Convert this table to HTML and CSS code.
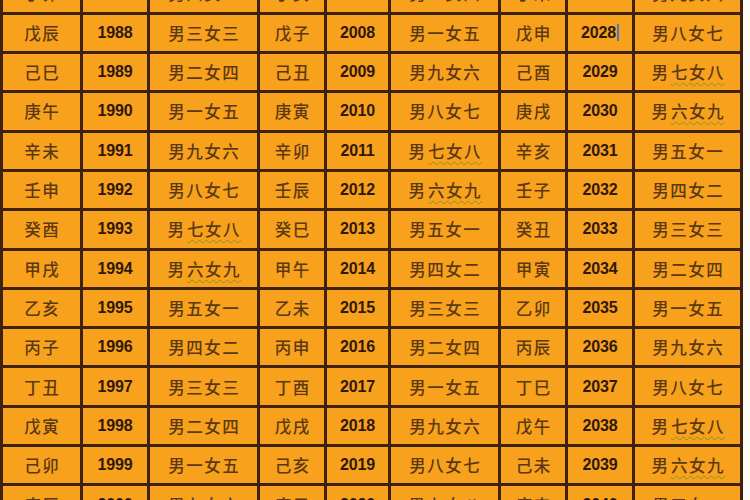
FILE: index.html
```html
<!DOCTYPE html>
<html lang="zh">
<head>
<meta charset="utf-8">
<title>生肖年份表</title>
<link rel="stylesheet" href="styles.css">
</head>
<body>
<div class="sheet">
  <div class="grid">
    <div class="c gz">丁卯</div><div class="c yr">1987</div><div class="c rs">男四女二</div><div class="c gz">丁亥</div><div class="c yr">2007</div><div class="c rs">男二女四</div><div class="c gz">丁未</div><div class="c yr">2027</div><div class="c rs">男九女六</div>
    <div class="c gz">戊辰</div><div class="c yr">1988</div><div class="c rs">男三女三</div><div class="c gz">戊子</div><div class="c yr">2008</div><div class="c rs">男一女五</div><div class="c gz">戊申</div><div class="c yr">2028<span class="caret"></span></div><div class="c rs">男八女七</div>
    <div class="c gz">己巳</div><div class="c yr">1989</div><div class="c rs">男二女四</div><div class="c gz">己丑</div><div class="c yr">2009</div><div class="c rs">男九女六</div><div class="c gz">己酉</div><div class="c yr">2029</div><div class="c rs">男<span class="sq">七女八</span></div>
    <div class="c gz">庚午</div><div class="c yr">1990</div><div class="c rs">男一女五</div><div class="c gz">庚寅</div><div class="c yr">2010</div><div class="c rs">男八女七</div><div class="c gz">庚戌</div><div class="c yr">2030</div><div class="c rs">男<span class="sq">六女九</span></div>
    <div class="c gz">辛未</div><div class="c yr">1991</div><div class="c rs">男九女六</div><div class="c gz">辛卯</div><div class="c yr">2011</div><div class="c rs">男<span class="sq">七女八</span></div><div class="c gz">辛亥</div><div class="c yr">2031</div><div class="c rs">男五女一</div>
    <div class="c gz">壬申</div><div class="c yr">1992</div><div class="c rs">男八女七</div><div class="c gz">壬辰</div><div class="c yr">2012</div><div class="c rs">男<span class="sq">六女九</span></div><div class="c gz">壬子</div><div class="c yr">2032</div><div class="c rs">男四女二</div>
    <div class="c gz">癸酉</div><div class="c yr">1993</div><div class="c rs">男<span class="sq">七女八</span></div><div class="c gz">癸巳</div><div class="c yr">2013</div><div class="c rs">男五女一</div><div class="c gz">癸丑</div><div class="c yr">2033</div><div class="c rs">男三女三</div>
    <div class="c gz">甲戌</div><div class="c yr">1994</div><div class="c rs">男<span class="sq">六女九</span></div><div class="c gz">甲午</div><div class="c yr">2014</div><div class="c rs">男四女二</div><div class="c gz">甲寅</div><div class="c yr">2034</div><div class="c rs">男二女四</div>
    <div class="c gz">乙亥</div><div class="c yr">1995</div><div class="c rs">男五女一</div><div class="c gz">乙未</div><div class="c yr">2015</div><div class="c rs">男三女三</div><div class="c gz">乙卯</div><div class="c yr">2035</div><div class="c rs">男一女五</div>
    <div class="c gz">丙子</div><div class="c yr">1996</div><div class="c rs">男四女二</div><div class="c gz">丙申</div><div class="c yr">2016</div><div class="c rs">男二女四</div><div class="c gz">丙辰</div><div class="c yr">2036</div><div class="c rs">男九女六</div>
    <div class="c gz">丁丑</div><div class="c yr">1997</div><div class="c rs">男三女三</div><div class="c gz">丁酉</div><div class="c yr">2017</div><div class="c rs">男一女五</div><div class="c gz">丁巳</div><div class="c yr">2037</div><div class="c rs">男八女七</div>
    <div class="c gz">戊寅</div><div class="c yr">1998</div><div class="c rs">男二女四</div><div class="c gz">戊戌</div><div class="c yr">2018</div><div class="c rs">男九女六</div><div class="c gz">戊午</div><div class="c yr">2038</div><div class="c rs">男<span class="sq">七女八</span></div>
    <div class="c gz">己卯</div><div class="c yr">1999</div><div class="c rs">男一女五</div><div class="c gz">己亥</div><div class="c yr">2019</div><div class="c rs">男八女七</div><div class="c gz">己未</div><div class="c yr">2039</div><div class="c rs">男<span class="sq">六女九</span></div>
    <div class="c gz">庚辰</div><div class="c yr">2000</div><div class="c rs">男九女六</div><div class="c gz">庚子</div><div class="c yr">2020</div><div class="c rs">男<span class="sq">七女八</span></div><div class="c gz">庚申</div><div class="c yr">2040</div><div class="c rs">男五女一</div>
  </div>
</div>
</body>
</html>
```
FILE: styles.css
```css
html, body {
  margin: 0;
  padding: 0;
  background: #fbfaf6;
  overflow: hidden;
  height: 500px;
}

.sheet {
  width: 750px;
  height: 500px;
  overflow: hidden;
}

.grid {
  display: grid;
  grid-template-columns: 77px 64px 107px 64px 61px 107px 64px 64px 105px;
  grid-auto-rows: 36.33px;
  gap: 3px;
  padding: 3px;
  width: max-content;
  margin-top: -27.8px;
  background: #3e220c;
}

.c {
  background: #f8a11d;
  display: flex;
  align-items: center;
  justify-content: center;
  white-space: nowrap;
}

.gz, .rs {
  font-family: "Noto Sans CJK SC", "Noto Sans", sans-serif;
  font-size: 16.5px;
  font-weight: 500;
  letter-spacing: 1.5px;
  color: #5c3912;
  text-indent: 1.5px;
}

.yr {
  font-family: "Liberation Sans", Arial, sans-serif;
  font-size: 16px;
  font-weight: 700;
  color: #2f1808;
  letter-spacing: -0.2px;
}

.sq {
  text-decoration: underline wavy #86961c;
  text-decoration-thickness: 1px;
  text-underline-offset: 3px;
}

.caret {
  display: inline-block;
  width: 2px;
  height: 17px;
  margin-left: 1px;
  background: #4a78c8;
}
```
